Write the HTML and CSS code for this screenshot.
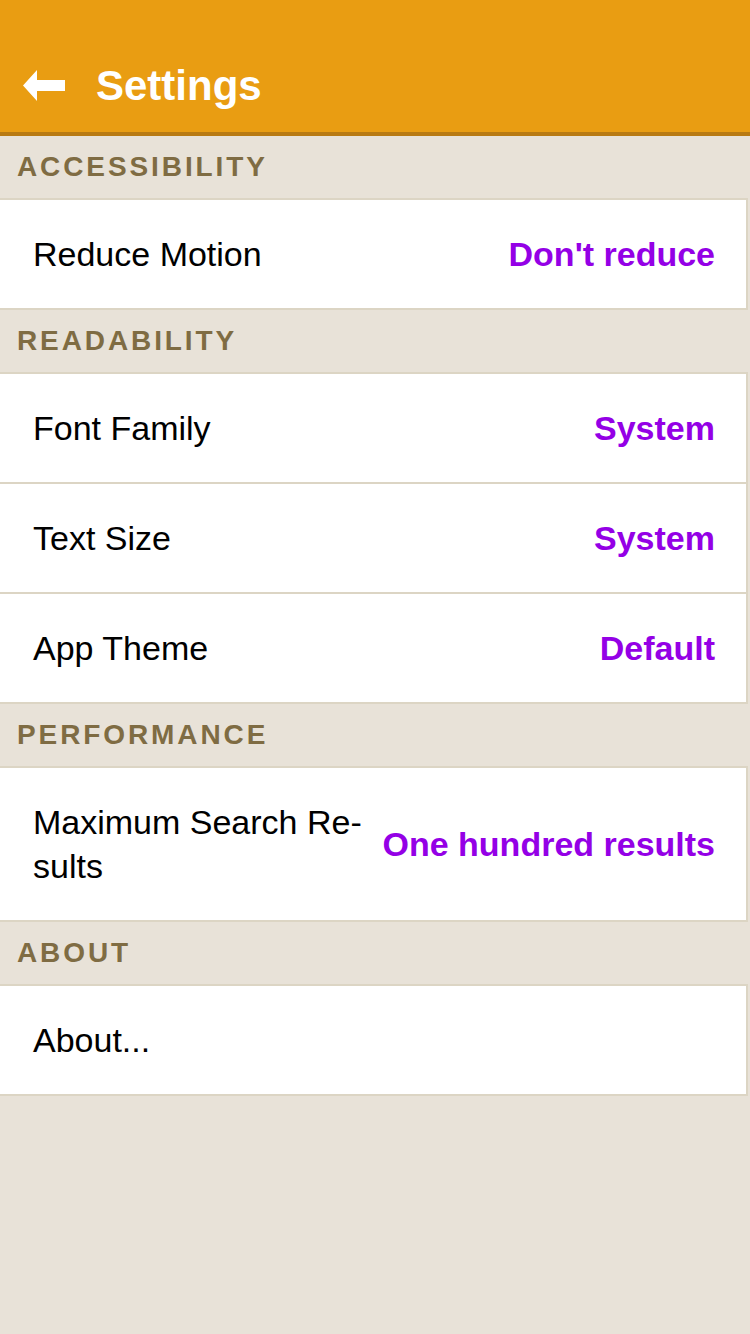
FILE: index.html
```html
<!DOCTYPE html>
<html lang="en">
<head>
<meta charset="utf-8">
<title>Settings</title>
<link rel="stylesheet" href="styles.css">
</head>
<body>
<div class="app">
  <header class="topbar">
    <svg class="back" width="42" height="31" viewBox="0 0 42 31" aria-hidden="true">
      <path d="M0 15.5 L14 0 L14 10 L42 10 L42 21 L14 21 L14 31 Z" fill="#ffffff"/>
    </svg>
    <h1 class="title">Settings</h1>
  </header>

  <div class="section-title">ACCESSIBILITY</div>
  <div class="group">
    <div class="row"><span class="label">Reduce Motion</span><span class="value">Don't reduce</span></div>
  </div>

  <div class="section-title">READABILITY</div>
  <div class="group">
    <div class="row"><span class="label">Font Family</span><span class="value">System</span></div>
    <div class="row"><span class="label">Text Size</span><span class="value">System</span></div>
    <div class="row"><span class="label">App Theme</span><span class="value">Default</span></div>
  </div>

  <div class="section-title">PERFORMANCE</div>
  <div class="group">
    <div class="row"><span class="label">Maximum Search Re&shy;sults</span><span class="value">One hundred results</span></div>
  </div>

  <div class="section-title">ABOUT</div>
  <div class="group">
    <div class="row"><span class="label">About...</span></div>
  </div>
</div>
</body>
</html>
```
FILE: styles.css
```css
html, body {
  margin: 0;
  padding: 0;
}
body {
  background: #e8e2d8;
  font-family: "Liberation Sans", Arial, sans-serif;
  width: 750px;
  min-height: 1334px;
}
.app {
  display: flex;
  flex-direction: column;
}
.topbar {
  height: 92px;
  padding-top: 40px;
  background: #e99d12;
  border-bottom: 4px solid #b87a12;
  display: flex;
  align-items: center;
  padding-left: 23px;
  gap: 31px;
}
.back {
  display: block;
  margin-top: -1px;
}
.title {
  margin: 0;
  color: #ffffff;
  font-size: 42px;
  font-weight: bold;
  line-height: 48px;
}
.section-title {
  height: 62px;
  display: flex;
  align-items: center;
  padding-left: 17px;
  color: #7f6c43;
  font-weight: bold;
  font-size: 28px;
  letter-spacing: 2.9px;
}
.group {
  width: 746px;
  background: #ffffff;
  border-top: 2px solid #dcd5c4;
  border-right: 2px solid #dcd5c4;
}
.row {
  display: flex;
  align-items: center;
  justify-content: space-between;
  gap: 16px;
  padding: 32px 31px 32px 33px;
  min-height: 44px;
  border-bottom: 2px solid #dcd5c4;
  font-size: 34px;
  line-height: 44px;
}
.label {
  color: #000000;
  flex: 1 1 auto;
  min-width: 0;
  hyphens: manual;
}
.value {
  color: #9400e6;
  font-weight: bold;
  flex: 0 0 auto;
  text-align: right;
}
```
